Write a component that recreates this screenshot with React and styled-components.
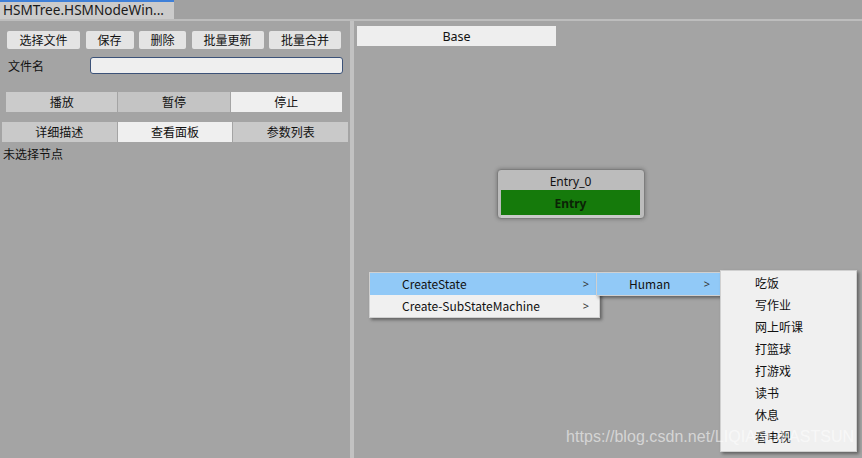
import React from "react";
import styled, { createGlobalStyle } from "styled-components";

const Global = createGlobalStyle`
    html, body {
        margin: 0;
        padding: 0;
        background: #a4a4a4;
    }
    body {
        font-family: "Noto Sans CJK SC", "Noto Sans", sans-serif;
        font-size: 12px;
        color: #111;
    }
`;

const Window = styled.div`
    position: relative;
    width: 862px;
    height: 458px;
    display: flex;
    flex-direction: column;
    overflow: hidden;
    background: #a4a4a4;
`;

const TabBar = styled.div`
    height: 19px;
    display: flex;
    background: #a1a1a1;
    border-bottom: 2px solid #bdbdbd;
`;

const Tab = styled.div`
    width: 174px;
    box-sizing: border-box;
    border-top: 2px solid #3f80d8;
    background: #cbcbcb;
    padding-left: 3px;
    line-height: 16px;
    font-family: "Noto Sans", sans-serif;
    font-size: 13.6px;
    color: #1a1a1a;
    white-space: nowrap;
    overflow: hidden;
`;

const Body = styled.div`
    flex: 1;
    display: flex;
`;

const LeftPanel = styled.div`
    width: 350px;
    display: flex;
    flex-direction: column;
    padding-top: 10px;
    box-sizing: border-box;
`;

const Splitter = styled.div`
    width: 4px;
    background: #c2c2c2;
`;

const RightPanel = styled.div`
    flex: 1;
    position: relative;
    padding: 5px 3px;
`;

const ButtonRow = styled.div`
    display: flex;
    gap: 5.5px;
    padding-left: 7px;
`;

const ToolButton = styled.div`
    width: ${(p) => p.$w}px;
    height: 18px;
    background: #e4e4e4;
    border-radius: 2px;
    text-align: center;
    line-height: 18px;
    font-size: 12px;
`;

const FieldRow = styled.div`
    display: flex;
    align-items: center;
    margin-top: 8px;
    padding-left: 8px;
    height: 17px;
`;

const Label = styled.div`
    width: 82px;
    font-size: 12px;
`;

const Input = styled.div`
    width: 253px;
    height: 17px;
    box-sizing: border-box;
    background: #efefef;
    border: 1px solid #3c5278;
    border-radius: 3px;
`;

const Segmented = styled.div`
    display: flex;
    margin-top: ${(p) => p.$mt}px;
    margin-left: ${(p) => p.$ml}px;
    width: ${(p) => p.$w}px;
    height: 20px;
    gap: 1px;
`;

const Segment = styled.div`
    flex: 1;
    background: ${(p) => (p.$active ? "#efefef" : p.$bg || "#c9c9c9")};
    text-align: center;
    line-height: 20px;
    font-size: 12px;
`;

const Hint = styled.div`
    margin-top: 3px;
    padding-left: 3px;
    font-size: 12px;
    line-height: 18px;
`;

const Crumb = styled.div`
    width: 199px;
    height: 20px;
    background: #eeeeee;
    text-align: center;
    line-height: 21px;
    font-family: "Noto Sans", "Noto Sans CJK SC", sans-serif;
    font-size: 12.5px;
`;

const Node = styled.div`
    position: absolute;
    left: 143px;
    top: 148px;
    width: 148px;
    height: 50px;
    box-sizing: border-box;
    border: 1px solid #7d7d7d;
    border-radius: 4px;
    background: #bcbcbc;
    box-shadow: 0 0 4px rgba(0, 0, 0, 0.3);
    display: flex;
    flex-direction: column;
    padding: 0 4px 0 3px;
`;

const NodeTitle = styled.div`
    height: 20px;
    line-height: 23px;
    text-align: center;
    font-family: "Noto Sans", sans-serif;
    font-size: 12px;
`;

const NodeBody = styled.div`
    height: 25px;
    background: #157a0b;
    text-align: center;
    line-height: 27px;
    font-family: "Noto Sans", sans-serif;
    font-weight: bold;
    font-size: 12px;
    color: #0b2306;
`;

const NodeFoot = styled.div`
    flex: 1;
    background: #cacaca;
`;

const Menu = styled.div`
    position: absolute;
    left: ${(p) => p.$x}px;
    top: ${(p) => p.$y}px;
    width: ${(p) => p.$w}px;
    box-sizing: border-box;
    background: #f0f0f0;
    border: 1px solid #d0d0d0;
    padding: ${(p) => p.$pad || "0"};
    box-shadow: 2px 2px 3px rgba(0, 0, 0, 0.4);
`;

const MenuItem = styled.div`
    position: relative;
    height: 22px;
    line-height: 21px;
    padding-left: ${(p) => p.$indent}px;
    background: ${(p) => (p.$hot ? "#91c9f7" : "transparent")};
    font-size: 12px;
    color: #111;
`;

const Arrow = styled.span`
    position: absolute;
    right: 10px;
    top: 0;
    font-family: "Noto Sans", sans-serif;
    font-size: 11px;
    color: #333;
`;

const Watermark = styled.div`
    position: absolute;
    left: 566px;
    top: 428px;
    font-family: "Liberation Sans", Arial, sans-serif;
    font-size: 16px;
    color: rgba(255, 255, 255, 0.55);
    letter-spacing: 0.05px;
    white-space: nowrap;
    pointer-events: none;
`;

const toolButtons = [
    ["选择文件", 73],
    ["保存", 48],
    ["删除", 47],
    ["批量更新", 72],
    ["批量合并", 72],
];

const actions = ["吃饭", "写作业", "网上听课", "打篮球", "打游戏", "读书", "休息", "看电视"];

function App() {
    return (
        <>
            <Global />
            <Window>
                <TabBar>
                    <Tab>HSMTree.HSMNodeWin...</Tab>
                </TabBar>
                <Body>
                    <LeftPanel>
                        <ButtonRow>
                            {toolButtons.map(([t, w]) => (
                                <ToolButton key={t} $w={w}>
                                    {t}
                                </ToolButton>
                            ))}
                        </ButtonRow>
                        <FieldRow>
                            <Label>文件名</Label>
                            <Input />
                        </FieldRow>
                        <Segmented $mt={18} $ml={6} $w={336}>
                            <Segment $bg="#cbcbcb">播放</Segment>
                            <Segment $bg="#c4c4c4">暂停</Segment>
                            <Segment $active>停止</Segment>
                        </Segmented>
                        <Segmented $mt={10} $ml={2} $w={346}>
                            <Segment>详细描述</Segment>
                            <Segment $active>查看面板</Segment>
                            <Segment>参数列表</Segment>
                        </Segmented>
                        <Hint>未选择节点</Hint>
                    </LeftPanel>
                    <Splitter />
                    <RightPanel>
                        <Crumb>Base</Crumb>
                        <Node>
                            <NodeTitle>Entry_0</NodeTitle>
                            <NodeBody>Entry</NodeBody>
                            <NodeFoot />
                        </Node>
                    </RightPanel>
                </Body>

                <Menu $x={369} $y={272} $w={231}>
                    <MenuItem $indent={32} $hot>
                        CreateState<Arrow>&gt;</Arrow>
                    </MenuItem>
                    <MenuItem $indent={32}>
                        Create-SubStateMachine<Arrow>&gt;</Arrow>
                    </MenuItem>
                </Menu>
                <Menu $x={596} $y={272} $w={125}>
                    <MenuItem $indent={32} $hot>
                        Human<Arrow>&gt;</Arrow>
                    </MenuItem>
                </Menu>
                <Menu $x={720} $y={270} $w={137} $pad="1px 1px 3px">
                    {actions.map((a) => (
                        <MenuItem key={a} $indent={33}>
                            {a}
                        </MenuItem>
                    ))}
                </Menu>

                <Watermark>https://blog.csdn.net/LIQIANGFASTSUN</Watermark>
            </Window>
        </>
    );
}

export default App;
